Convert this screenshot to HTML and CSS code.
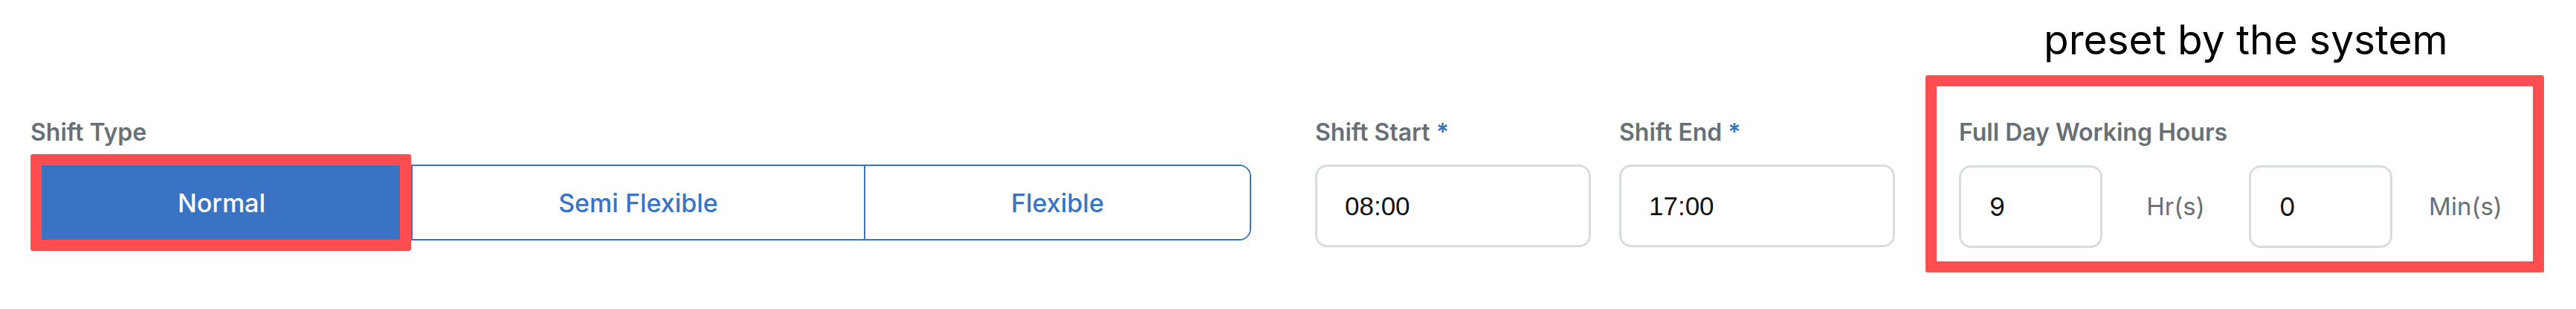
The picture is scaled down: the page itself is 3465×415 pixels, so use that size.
FILE: index.html
```html
<!DOCTYPE html>
<html lang="en">
<head>
    <meta charset="UTF-8">
    <meta name="viewport" content="width=device-width, initial-scale=1.0">
    <title>Shift Settings</title>
    <link rel="stylesheet" href="styles.css">
</head>
<body>
    <div class="form-row">
        <div class="field shift-type">
            <label class="field-label">Shift Type</label>
            <div class="segmented">
                <button class="segment active">Normal</button>
                <button class="segment">Semi Flexible</button>
                <button class="segment">Flexible</button>
            </div>
        </div>

        <div class="time-pair">
            <div class="field time-field">
                <label class="field-label">Shift Start <span class="req">*</span></label>
                <input class="text-input" type="text" value="08:00">
            </div>
            <div class="field time-field">
                <label class="field-label">Shift End <span class="req">*</span></label>
                <input class="text-input" type="text" value="17:00">
            </div>
        </div>

        <div class="field preset">
            <div class="preset-note">preset by the system</div>
            <label class="field-label">Full Day Working Hours</label>
            <div class="duration">
                <input class="text-input num-input" type="text" value="9">
                <span class="unit">Hr(s)</span>
                <input class="text-input num-input" type="text" value="0">
                <span class="unit">Min(s)</span>
            </div>
        </div>
    </div>
</body>
</html>
```

FILE: styles.css
```css
body {
    margin: 0;
    min-height: 415px;
    background: #fff;
    font-family: Inter, "Liberation Sans", sans-serif;
}
.form-row {
    display: flex;
    align-items: flex-start;
    gap: 86px;
    padding: 158px 0 0 41px;
}
.field-label {
    display: block;
    font-size: 32px;
    line-height: 40px;
    font-weight: 600;
    color: #687075;
    margin-bottom: 23px;
}
.req {
    color: #3b73c4;
}

/* shift type toggle */
.segmented {
    display: flex;
    width: 1642px;
    height: 102px;
    box-sizing: border-box;
    border: 2px solid #3b73c4;
    border-radius: 16px;
}
.segment {
    flex: 1 1 auto;
    margin: 0;
    padding: 0;
    border: none;
    background: #fff;
    font-family: Inter, sans-serif;
    font-size: 34px;
    font-weight: 500;
    color: #3b73c4;
    cursor: pointer;
}
.segment + .segment {
    border-left: 2px solid #3b73c4;
}
.segment:first-child {
    border-radius: 14px 0 0 14px;
}
.segment:last-child {
    border-radius: 0 14px 14px 0;
}
.segment.active {
    position: relative;
    background: #3b73c4;
    color: #fff;
}
.segment.active::after {
    content: "";
    position: absolute;
    top: -16px;
    bottom: -16px;
    left: -2px;
    right: 0;
    border: 15px solid #ff4d50;
    border-radius: 3px;
}

/* time inputs */
.time-pair {
    display: flex;
    gap: 38px;
}
.text-input {
    display: block;
    box-sizing: border-box;
    height: 111px;
    margin-top: 1px;
    padding: 0 0 0 37px;
    border: 3px solid #d7dce0;
    border-radius: 16px;
    background: #fff;
    font-family: "Liberation Sans", Arial, sans-serif;
    font-size: 35px;
    color: #111;
    outline: none;
}
.time-field .text-input {
    width: 371px;
}

/* full day working hours */
.preset {
    position: relative;
}
.preset::after {
    content: "";
    position: absolute;
    top: -57px;
    bottom: -33px;
    left: -45px;
    right: -7px;
    border: 15px solid #ff4d50;
    border-radius: 3px;
}
.preset-note {
    position: absolute;
    top: -135px;
    left: 114px;
    white-space: nowrap;
    font-family: Inter, sans-serif;
    font-size: 55px;
    line-height: 60px;
    color: #000;
}
.duration {
    display: flex;
    align-items: center;
}
.num-input {
    width: 193px;
    font-family: Inter, sans-serif;
    font-size: 34px;
    padding-left: 38px;
}
.unit {
    width: 197px;
    text-align: center;
    font-size: 33px;
    color: #687075;
}
```
